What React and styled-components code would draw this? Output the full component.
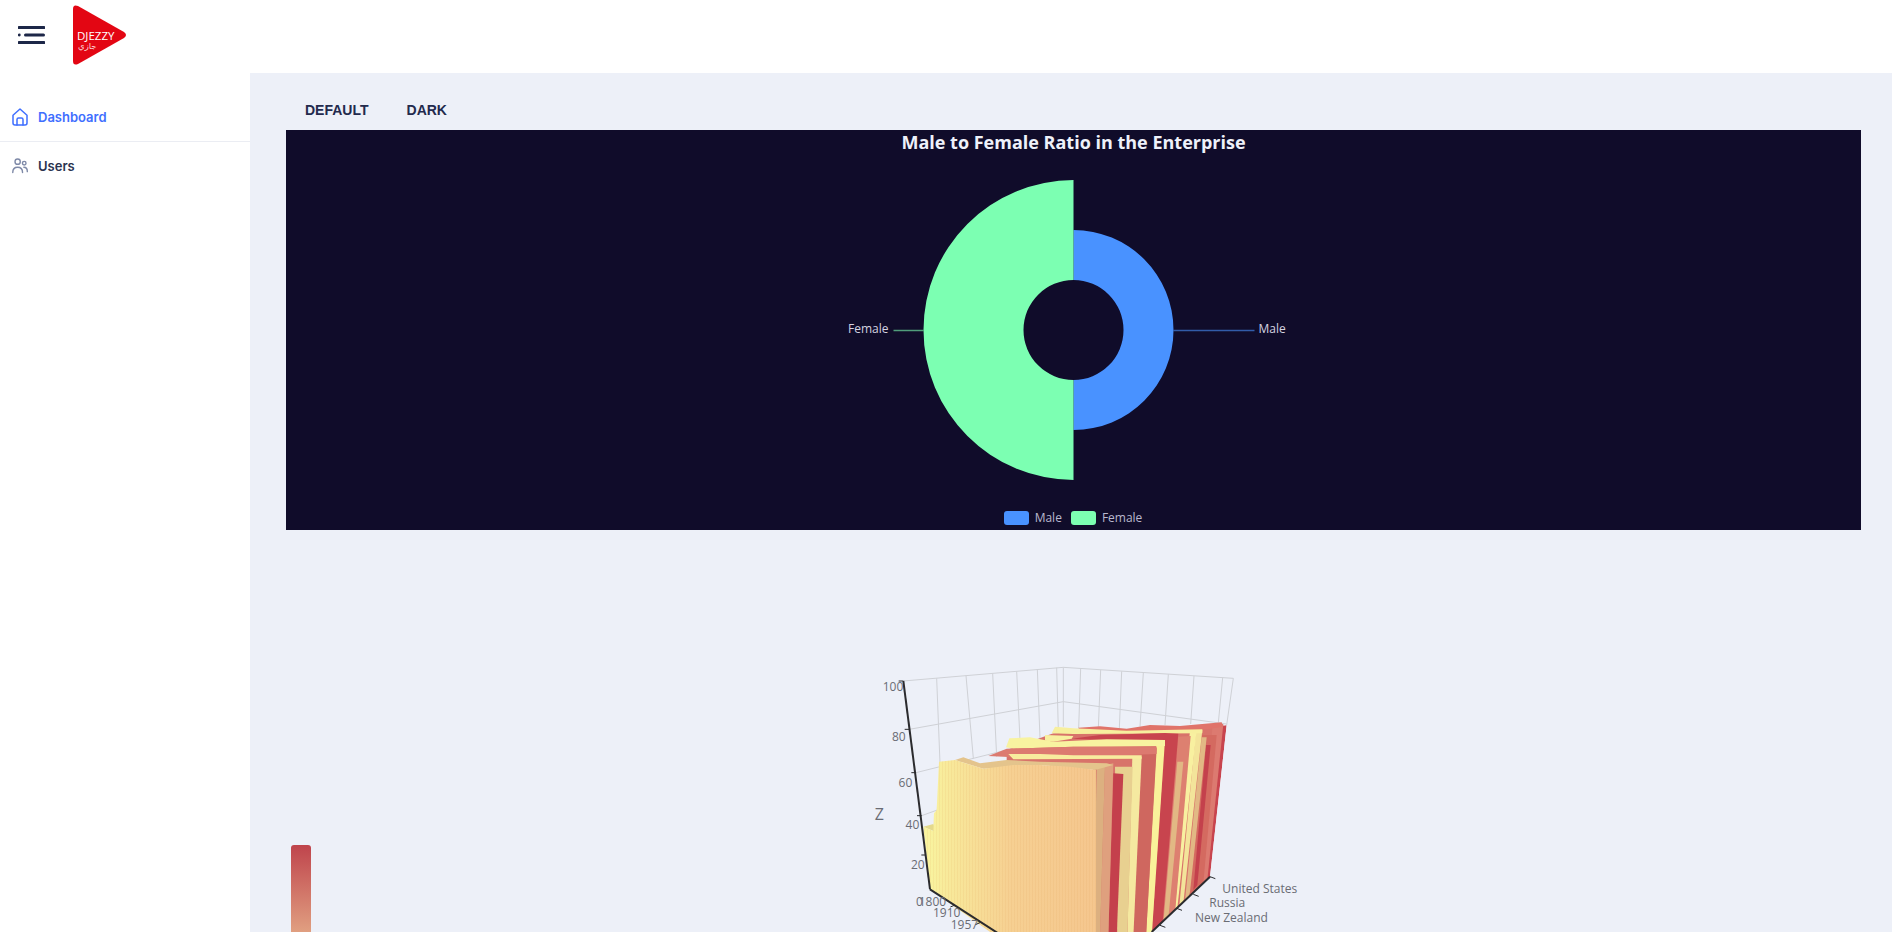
import React from "react";
import styled, { createGlobalStyle } from "styled-components";

const GlobalStyle = createGlobalStyle`
  html, body {
    margin: 0;
    height: 100%;
    overflow: hidden;
    background: #fff;
    font-family: "Inter", "Liberation Sans", sans-serif;
  }
  * { box-sizing: border-box; }
`;

const Page = styled.div`
  height: 100vh;
  display: flex;
  flex-direction: column;
  overflow: hidden;
`;

const Header = styled.header`
  height: 73px;
  flex: none;
  background: #fff;
  display: flex;
  align-items: center;
  padding: 0 0 3px 18px;
  gap: 27px;
`;

const Body = styled.div`
  flex: 1;
  display: flex;
  min-height: 0;
`;

const Sidebar = styled.nav`
  width: 250px;
  flex: none;
  background: #fff;
  padding-top: 19px;
`;

const NavItem = styled.a`
  height: ${(p) => (p.$active ? "50px" : "47px")};
  display: flex;
  align-items: center;
  gap: 10px;
  padding-left: 12px;
  font-size: 13px;
  font-weight: 600;
  color: ${(p) => (p.$active ? "#3f6fff" : "#2b3350")};
  border-bottom: ${(p) => (p.$active ? "1px solid #ebedf3" : "none")};
`;

const Main = styled.main`
  flex: 1;
  min-width: 0;
  background: #edf0f8;
  padding: 0 31px 0 36px;
  overflow: hidden;
`;

const Tabs = styled.div`
  height: 57px;
  display: flex;
  align-items: flex-end;
`;

const Tab = styled.button`
  border: none;
  background: none;
  height: 40px;
  padding: 0 19px;
  font-family: "Liberation Sans", Arial, sans-serif;
  font-size: 14px;
  font-weight: 700;
  color: #232a4d;
  cursor: pointer;
`;

const DarkPanel = styled.section`
  height: 400px;
  background: #100c2a;
  display: flex;
  flex-direction: column;
  align-items: center;
`;

const PanelTitle = styled.h2`
  margin: 0;
  height: 26px;
  line-height: 24px;
  font-family: "Open Sans", sans-serif;
  font-size: 18px;
  font-weight: 700;
  color: #eef1fa;
`;

const PieSvg = styled.svg`
  display: block;
  flex: none;
`;

const Legend = styled.div`
  margin-top: 15px;
  margin-left: -1px;
  display: flex;
  gap: 9px;
  font-family: "Open Sans", sans-serif;
  font-size: 12px;
  line-height: 14px;
  color: #b9b8ce;
`;

const LegendItem = styled.span`
  display: flex;
  align-items: center;
  gap: 6px;
`;

const Swatch = styled.i`
  width: 25px;
  height: 14px;
  border-radius: 3px;
  background: ${(p) => p.$color};
`;

const SurfaceSection = styled.section`
  position: relative;
  height: 400px;
  margin-top: 120px;
  display: flex;
  justify-content: center;
`;

const ScaleBar = styled.div`
  position: absolute;
  left: 5px;
  top: 195px;
  width: 20px;
  height: 200px;
  border-radius: 3px;
  background: linear-gradient(#bf444c, #e09e80 43%, #f6dc98 80%, #fbf8a8);
`;

const SurfaceSvg = styled.svg`
  display: block;
  flex: none;
`;

const AxisText = styled.text`
  font-family: "Open Sans", sans-serif;
  font-size: ${(p) => p.$size || 36}px;
  fill: #6a6c74;
`;

const HomeIcon = () => (
  <svg width="16" height="18" viewBox="0 0 16 18" fill="none" stroke="#3f6fff" strokeWidth="1.5" strokeLinejoin="round" strokeLinecap="round">
    <path d="M1 7.2 8 1l7 6.2V15a2 2 0 0 1-2 2H3a2 2 0 0 1-2-2z" />
    <path d="M5 17v-5.5a1.5 1.5 0 0 1 1.5-1.5h3a1.5 1.5 0 0 1 1.5 1.5V17" />
  </svg>
);

const UsersIcon = () => (
  <svg width="16" height="18" viewBox="0 0 17 16" fill="none" stroke="#7f8aa8" strokeWidth="1.5" strokeLinecap="round" style={{ overflow: "visible" }}>
    <circle cx="6" cy="3.4" r="2.8" />
    <circle cx="13" cy="5" r="1.9" />
    <path d="M.8 15c0-3.6 2.3-5.6 5.2-5.6s5.2 2 5.2 5.6" />
    <path d="M12.6 9.4c2.2 0 3.7 1.8 3.7 4.6" />
  </svg>
);

const HamburgerIcon = () => (
  <svg width="28" height="18" viewBox="0 0 28 18" fill="#1d2748">
    <rect x="0" y="0" width="27" height="3" rx="0.6" />
    <circle cx="1.3" cy="9" r="1.4" />
    <rect x="6" y="7.5" width="21" height="3" rx="1.5" />
    <rect x="0" y="15" width="27" height="3" rx="0.6" />
  </svg>
);

const Logo = () => (
  <svg width="54" height="60" viewBox="0 0 54 60">
    <path d="M0 4Q0-1 5 1L51 27Q55 30 51 33L5 59Q0 61 0 56Z" fill="#e30613" />
    <text x="4" y="35" fontFamily="Open Sans, sans-serif" fontSize="11.5" fill="#fff">DJEZZY</text>
    <text x="5" y="44" fontFamily="DejaVu Sans, sans-serif" fontSize="8.5" fill="#fbd5d5">جازي</text>
  </svg>
);

const PieChart = () => {
  // centre sits at 299.5,174 in the chart area
  const cx = 299.5;
  const cy = 174;
  return (
    <PieSvg width="600" height="340" viewBox="0 0 600 340">
      <path d={`M${cx} ${cy - 100}A100 100 0 0 1 ${cx} ${cy + 100}V${cy + 50}A50 50 0 0 0 ${cx} ${cy - 50}Z`} fill="#4992ff" />
      <path d={`M${cx} ${cy - 150}A150 150 0 0 0 ${cx} ${cy + 150}V${cy + 50}A50 50 0 0 1 ${cx} ${cy - 50}Z`} fill="#7cffb2" />
      <path d={`M${cx + 100} ${cy + 0.5}H${cx + 181}`} stroke="#4992ff" strokeOpacity="0.6" strokeWidth="1.5" fill="none" />
      <path d={`M${cx - 150} ${cy + 0.5}H${cx - 180}`} stroke="#7cffb2" strokeOpacity="0.6" strokeWidth="1.5" fill="none" />
      <text x={cx + 185} y={cy + 3} fontFamily="Open Sans, sans-serif" fontSize="12" fill="#d4d3e0">Male</text>
      <text x={cx - 185} y={cy + 3} textAnchor="end" fontFamily="Open Sans, sans-serif" fontSize="12" fill="#d4d3e0">Female</text>
    </PieSvg>
  );
};

// surface geometry is written in 3x units, viewBox maps it back to real pixels
const leftWall = [
  [290, 85, 300, 340], [378, 77, 400, 325], [458, 70, 470, 320], [530, 64, 540, 270], [592, 58, 600, 265], [650, 53, 655, 240],
];
const rightWall = [
  [722, 56, 716, 235], [782, 60, 775, 235], [845, 64, 838, 235], [910, 68, 900, 230], [985, 73, 975, 225], [1062, 78, 1052, 222], [1148, 83, 1135, 218],
];
const gridLines = [
  [190, 93, 670, 52], [670, 52, 1180, 85], [1180, 85, 1160, 225], [670, 52, 670, 230],
  [208, 238, 670, 155], [670, 155, 1160, 222], [228, 368, 500, 300], [245, 497, 292, 480],
];

// right hand ribbons, back to front: top left, top right, bottom left, bottom right
const ribbons = [
  ["#c8444e", 1145, 228, 1160, 226, 1085, 760, 1110, 680],
  ["#dc7a70", 1118, 222, 1150, 222, 1072, 760, 1102, 690],
  ["#d46a60", 1085, 255, 1130, 255, 1035, 800, 1090, 700],
  ["#c4414c", 1098, 285, 1112, 285, 1060, 720, 1072, 705],
  ["#e2b884", 1085, 262, 1100, 262, 1030, 800, 1050, 725],
  ["#f3e49a", 1068, 240, 1087, 240, 1012, 830, 1030, 760],
  ["#f8f0a0", 1050, 240, 1070, 240, 1000, 830, 1012, 775],
  ["#dd8070", 1015, 260, 1052, 258, 965, 860, 1005, 790],
  ["#e2b884", 1012, 335, 1030, 335, 970, 820, 985, 805],
  ["#c8444e", 975, 250, 1015, 250, 935, 860, 968, 816],
  ["#f9f29a", 950, 270, 975, 270, 918, 860, 935, 860],
  ["#cf675f", 905, 300, 950, 295, 880, 860, 918, 860],
  ["#f5e9a0", 877, 320, 905, 320, 862, 860, 880, 860],
  ["#e8d090", 825, 350, 878, 350, 832, 860, 862, 860],
  ["#c4404c", 820, 370, 850, 372, 805, 860, 830, 860],
  ["#dfa07e", 795, 345, 820, 340, 780, 860, 805, 860],
  ["#dcb080", 770, 355, 795, 345, 760, 860, 780, 860],
];

const roofs = [
  ["#e0736a", "715,233 780,229 860,236 930,225 1020,228 1145,217 1150,230 1085,240 720,245"],
  ["#f7ef9e", "635,250 645,230 700,235 860,242 1087,238 1087,250 700,252"],
  ["#c8444e", "695,266 780,255 975,249 1015,252 975,270 800,270"],
  ["#f8f0a0", "615,255 700,258 695,266 640,275 615,272"],
  ["#f8f3a0", "498,292 508,265 570,262 640,275 800,268 975,270 975,288 700,290 520,296"],
  ["#dc7a70", "445,318 500,296 700,290 950,292 950,312 700,320 520,322"],
  ["#f8ec9e", "505,312 600,312 700,316 905,316 905,326 520,328"],
  ["#e4c48c", "345,330 370,322 420,340 500,330 600,335 800,340 820,345 765,360 600,345 430,356"],
];

const backing = "500,300 640,250 1150,225 1105,690 935,860 760,860 760,345 500,345";
const facePoints =
  "250,530 280,543 282,490 290,480 297,335 345,330 430,356 520,345 600,345 690,350 768,360 768,860 470,860 270,718";

const SurfaceChart = () => (
  <SurfaceSvg width="481" height="282" viewBox="-21 0 1443 846">
    <defs>
      <linearGradient id="faceFill" gradientUnits="userSpaceOnUse" x1="250" y1="0" x2="770" y2="0">
        <stop offset="0" stopColor="#f9f6a0" />
        <stop offset="0.16" stopColor="#f8e89a" />
        <stop offset="0.5" stopColor="#f6d092" />
        <stop offset="1" stopColor="#f5c68e" />
      </linearGradient>
      <pattern id="faceStripes" width="9" height="9" patternUnits="userSpaceOnUse">
        <rect x="0" width="2" height="9" fill="#d99a50" fillOpacity="0.16" />
      </pattern>
      <clipPath id="underAxis">
        <polygon points="0,0 1165,0 1160,225 1110,680 935,846 935,900 0,900" />
      </clipPath>
    </defs>

    {gridLines.map(([a, b, c, d], i) => (
      <line key={i} x1={a} y1={b} x2={c} y2={d} stroke="#cfd1d6" strokeWidth="3" />
    ))}
    {[...leftWall, ...rightWall].map(([a, b, c, d], i) => (
      <line key={i} x1={a} y1={b} x2={c} y2={d} stroke="#cfd1d6" strokeWidth="3" />
    ))}

    <g clipPath="url(#underAxis)">
      <polygon points={backing} fill="#d8736a" />
      {ribbons.map(([fill, a, b, c, d, e, f, g, h], i) => (
        <polygon key={i} points={`${a},${b} ${c},${d} ${g},${h} ${e},${f}`} fill={fill} />
      ))}
      {roofs.map(([fill, pts], i) => (
        <polygon key={i} points={pts} fill={fill} />
      ))}
      <polygon points="250,530 280,522 288,543 280,543" fill="#e4d98c" />
      <polygon points={facePoints} fill="url(#faceFill)" />
      <polygon points={facePoints} fill="url(#faceStripes)" />
    </g>

    <line x1="190" y1="93" x2="270" y2="718" stroke="#2b2b2e" strokeWidth="6" />
    <path d="M270 718 490 860M1110 680 935 846" stroke="#2b2b2e" strokeWidth="6" fill="none" />
    <path d="M190 93h-14M208 238h-14M228 368h-14M245 497h-14M258 615h-14" stroke="#2b2b2e" strokeWidth="3" fill="none" />
    <path d="M1110 680l16 6M1060 733l16 6M1010 775l16 6M960 826l16 6M345 765l-14 6M420 818l-14 6" stroke="#2b2b2e" strokeWidth="3" fill="none" />

    <AxisText x="190" y="124" textAnchor="end">100</AxisText>
    <AxisText x="197" y="272" textAnchor="end">80</AxisText>
    <AxisText x="217" y="410" textAnchor="end">60</AxisText>
    <AxisText x="238" y="538" textAnchor="end">40</AxisText>
    <AxisText x="254" y="656" textAnchor="end">20</AxisText>
    <AxisText x="228" y="768">0</AxisText>
    <AxisText x="236" y="768">1800</AxisText>
    <AxisText x="279" y="802">1910</AxisText>
    <AxisText x="332" y="838">1957</AxisText>
    <AxisText x="1147" y="729">United States</AxisText>
    <AxisText x="1108" y="771">Russia</AxisText>
    <AxisText x="1065" y="816">New Zealand</AxisText>
    <AxisText x="104" y="510" $size={48}>Z</AxisText>
  </SurfaceSvg>
);

export default function App() {
  return (
    <Page>
      <GlobalStyle />
      <Header>
        <HamburgerIcon />
        <Logo />
      </Header>
      <Body>
        <Sidebar>
          <NavItem $active>
            <HomeIcon />
            Dashboard
          </NavItem>
          <NavItem>
            <UsersIcon />
            Users
          </NavItem>
        </Sidebar>
        <Main>
          <Tabs>
            <Tab>DEFAULT</Tab>
            <Tab>DARK</Tab>
          </Tabs>
          <DarkPanel>
            <PanelTitle>Male to Female Ratio in the Enterprise</PanelTitle>
            <PieChart />
            <Legend>
              <LegendItem>
                <Swatch $color="#4992ff" />
                Male
              </LegendItem>
              <LegendItem>
                <Swatch $color="#7cffb2" />
                Female
              </LegendItem>
            </Legend>
          </DarkPanel>
          <SurfaceSection>
            <ScaleBar />
            <SurfaceChart />
          </SurfaceSection>
        </Main>
      </Body>
    </Page>
  );
}
